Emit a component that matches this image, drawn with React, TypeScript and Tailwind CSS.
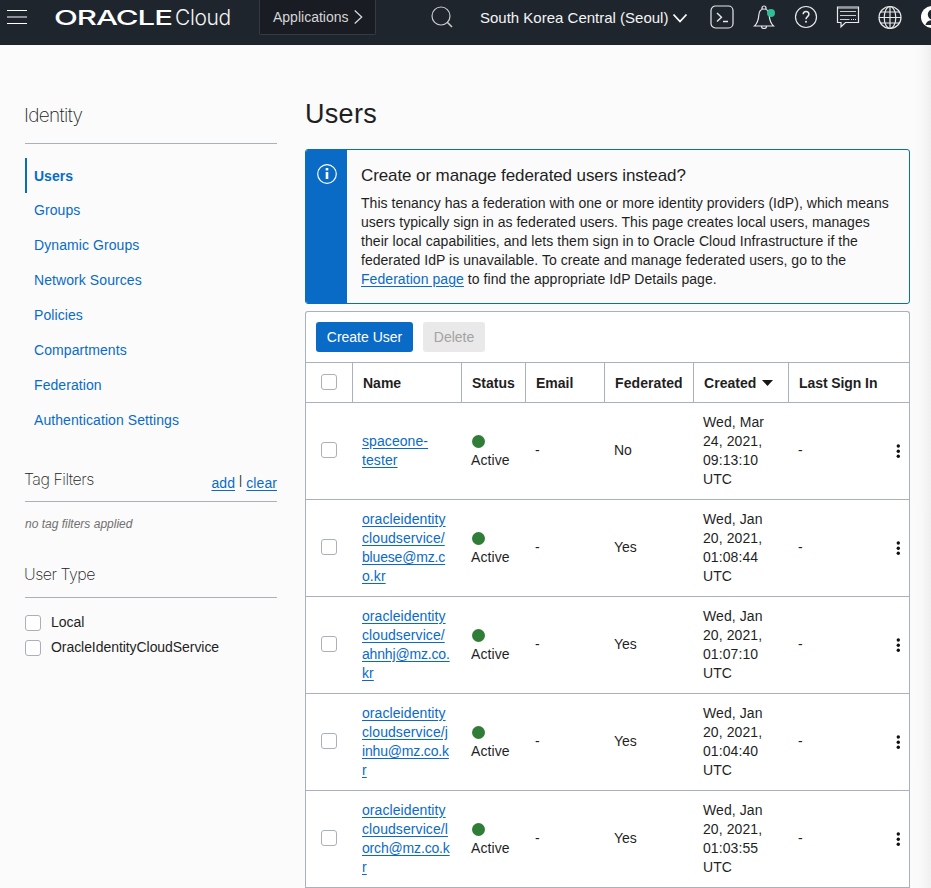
import type { ReactNode } from "react";

const navItems = [
  "Groups",
  "Dynamic Groups",
  "Network Sources",
  "Policies",
  "Compartments",
  "Federation",
  "Authentication Settings",
];

const users = [
  { name: ["spaceone-", "tester"], federated: "No", created: ["Wed, Mar", "24, 2021,", "09:13:10", "UTC"] },
  { name: ["oracleidentity", "cloudservice/", "bluese@mz.c", "o.kr"], federated: "Yes", created: ["Wed, Jan", "20, 2021,", "01:08:44", "UTC"] },
  { name: ["oracleidentity", "cloudservice/", "ahnhj@mz.co.", "kr"], federated: "Yes", created: ["Wed, Jan", "20, 2021,", "01:07:10", "UTC"] },
  { name: ["oracleidentity", "cloudservice/j", "inhu@mz.co.k", "r"], federated: "Yes", created: ["Wed, Jan", "20, 2021,", "01:04:40", "UTC"] },
  { name: ["oracleidentity", "cloudservice/l", "orch@mz.co.k", "r"], federated: "Yes", created: ["Wed, Jan", "20, 2021,", "01:03:55", "UTC"] },
];

const columns = "grid grid-cols-[47px_109px_64px_79px_89px_95px_120px]";

function Checkbox() {
  return <span className="block h-4 w-4 shrink-0 rounded-[3px] border border-[#a9b0ba] bg-white" />;
}

function Lines({ items }: { items: string[] }) {
  return (
    <>
      {items.map((line, i) => (
        <span key={i} className={`block whitespace-nowrap ${line.includes("@") ? "tracking-[-0.17px]" : "tracking-[0.08px]"}`}>{line}</span>
      ))}
    </>
  );
}

function Link({ children }: { children: ReactNode }) {
  return <a className="text-[#0a6bc7] underline underline-offset-2">{children}</a>;
}

function Icon({ children }: { children: ReactNode }) {
  return (
    <svg width="24" height="24" viewBox="0 0 24 24" fill="none" stroke="#e8e9ea" strokeWidth="1.2" className="shrink-0">
      {children}
    </svg>
  );
}

function Header() {
  return (
    <header className="flex h-[45px] items-start overflow-hidden bg-[#1e252d] text-[#f4f4f4]">
      <div className="ml-[7px] mt-2.5 flex w-5 shrink-0 flex-col gap-1.5">
        <span className="h-px bg-white" />
        <span className="-my-px h-[2px] bg-[#8d9094]" />
        <span className="h-px bg-white" />
      </div>
      <div className="ml-[27px] mt-[6px] flex h-6 w-[179px] shrink-0 items-center whitespace-nowrap">
        <span className="w-[121px] origin-left scale-x-[1.52] font-[Inter] text-[20.5px] leading-6 font-medium tracking-[-0.7px] text-white">ORACLE</span>
        <span className="font-[Inter] text-[21px] leading-6 font-light tracking-[-0.4px]">Cloud</span>
      </div>
      <div className="ml-[26px] flex h-[35px] w-[117px] shrink-0 items-center rounded-b-[2px] border border-t-0 border-[#343b43] bg-[#191d23] pl-[13px] text-sm text-[#d5d6d7]">
        <span className="w-[81px]">Applications</span>
        <svg width="9" height="16" viewBox="0 0 9 16" fill="none" stroke="#d5d6d7" strokeWidth="1.3"><path d="M.7 1.5 7.7 8 .7 14.5" /></svg>
      </div>
      <div className="ml-[54px] mt-[6px] flex h-6 shrink-0 items-center">
        <Icon><circle cx="11" cy="10" r="9" stroke="#c8cacc" /><path d="m17 16 5 5" stroke="#c8cacc" strokeWidth="1.6" /></Icon>
        <span className="ml-[26px] w-[193px] whitespace-nowrap text-[15px]">South Korea Central (Seoul)</span>
        <svg width="16" height="10" viewBox="0 0 16 10" fill="none" stroke="white" strokeWidth="1.8" className="-ml-px"><path d="m1.5 1.5 6.5 7 6.500-7" /></svg>
      </div>
      <div className="ml-[22px] mt-[5px] flex shrink-0 items-center gap-[18px]">
        <Icon>
          <rect x="1" y="1" width="22" height="22" rx="4.5" />
          <path d="m7 8 4.500 4.200L7 16.500M13 16.500h5" strokeWidth="1.4" />
        </Icon>
        <Icon>
          <path d="M10 4V3a2 2 0 0 1 4 0v1M12 4C8.800 4 7 6.700 6.800 10.300 6.500 15 5.500 18.200 2.500 21h19c-3-2.800-4-6-4.300-10.700C17 6.700 15.200 4 12 4ZM9.500 21.500a2.500 2 0 0 0 5 0" />
          <circle cx="19" cy="8" r="4" fill="#32bd98" stroke="none" />
        </Icon>
        <Icon>
          <circle cx="12" cy="12" r="10.500" />
          <path d="M9.200 9.300c0-3.700 5.700-3.700 5.700 0 0 2.300-2.900 2.400-2.900 5" strokeWidth="1.500" />
          <circle cx="12" cy="16.800" r="1" fill="#e8e9ea" stroke="none" />
        </Icon>
        <Icon>
          <path d="M1.500 2h21v15.500H9.500l-4.500 4.300v-4.300H1.500Z" />
          <path d="M2 3h20" stroke="#9da1a5" strokeWidth="1.500" />
          <path d="M4 6.500h16M4 10.500h16M4 14.500h9.500" stroke="#c9cbcd" strokeWidth="1" />
          <path d="M15 14.500h5" strokeDasharray="1 1" />
        </Icon>
        <Icon>
          <circle cx="12" cy="12.500" r="11" />
          <ellipse cx="12" cy="12.500" rx="5.800" ry="11" />
          <path d="M12 1.500v22M1 12.500h22M3 7h18M3 18h18" />
        </Icon>
        <svg width="24" height="24" viewBox="0 0 24 24" className="shrink-0"><circle cx="12" cy="12" r="11" fill="white" /><circle cx="13" cy="9.500" r="5.200" fill="#1e252d" /><path d="M5.500 20c.8-3.400 3-5 7.500-5s7 2 7 5Z" fill="#1e252d" /></svg>
      </div>
    </header>
  );
}

function Sidebar() {
  return (
    <aside className="ml-[25px] w-[252px] shrink-0">
      <h2 className="mt-[58px] h-[41px] border-b border-[#a9b1bd] font-[Inter] text-[19px] leading-[25px] font-extralight tracking-[-0.65px] text-[#222]"><span className="-ml-px">Identity</span></h2>
      <nav className="mt-[14px] text-sm text-[#0a6bc7]">
        <a className="flex h-[35px] items-center border-l-2 border-[#0a6bc7] pl-[7px] font-bold">Users</a>
        {navItems.map((label) => (
          <a key={label} className="flex h-[35px] items-center pb-[2px] pl-[9px] tracking-[0.08px]">{label}</a>
        ))}
      </nav>
      <div className="mt-[29px] flex h-[35px] items-start justify-between border-b border-[#a9b1bd]">
        <h3 className="-ml-px font-[Inter] text-[16px] leading-6 font-extralight tracking-[-0.5px] text-[#222]">Tag Filters</h3>
        <div className="mt-1.5 flex gap-[4px] text-sm leading-5 tracking-[0.08px]"><Link>add</Link><span className="-mt-px text-xs">|</span><Link>clear</Link></div>
      </div>
      <p className="mt-[12px] text-xs leading-5 italic text-[#707070]">no tag filters applied</p>
      <h3 className="mt-[28px] h-[36px] border-b border-[#a9b1bd] font-[Inter] text-[16px] leading-6 font-extralight tracking-[-0.5px] text-[#222]"><span className="-ml-px">User Type</span></h3>
      <div className="mt-3 flex flex-col text-sm">
        <label className="flex h-[25px] items-center gap-2.5"><Checkbox /><span className="-mt-[2px]">Local</span></label>
        <label className="flex h-[25px] items-center gap-2.5"><Checkbox /><span className="-mt-[2px] tracking-[-0.06px]">OracleIdentityCloudService</span></label>
      </div>
    </aside>
  );
}

function Notice() {
  return (
    <section className="flex h-[155px] overflow-hidden rounded-[3px] border border-[#0a6bc7]">
      <div className="w-[41px] shrink-0 bg-[#0a6bc7] pt-[13px] pl-[11px]">
        <svg width="20" height="22" viewBox="0 0 20 22" fill="none" stroke="white"><circle cx="10" cy="11" r="9.300" strokeWidth="1.200" /><path d="M10 9v7M10 5v2.400" strokeWidth="2.600" /></svg>
      </div>
      <div className="pl-[14px] pt-[14px] whitespace-nowrap">
        <h2 className="text-[17px] leading-6 tracking-[-0.1px]">Create or manage federated users instead?</h2>
        <p className="mt-[6px] text-sm leading-[19px]">
          <span className="block tracking-[0.03px]">This tenancy has a federation with one or more identity providers (IdP), which means</span>
          <span className="block tracking-[0.02px]">users typically sign in as federated users. This page creates local users, manages</span>
          <span className="block tracking-[0.07px]">their local capabilities, and lets them sign in to Oracle Cloud Infrastructure if the</span>
          <span className="block tracking-[0.03px]">federated IdP is unavailable. To create and manage federated users, go to the</span>
          <span className="block tracking-[0.06px]"><Link>Federation page</Link> to find the appropriate IdP Details page.</span>
        </p>
      </div>
    </section>
  );
}

function UserTable() {
  return (
    <section className="mt-[7px] rounded-t-[3px] border border-b-0 border-[#a9b1bd] bg-white text-sm">
      <div className="flex h-[50px] items-center gap-2.5 pl-2.5">
        <button className="h-[30px] w-[97px] rounded-[3px] bg-[#0a6bc7] text-white">Create User</button>
        <button className="h-[30px] w-[62px] rounded-[3px] bg-[#e9e9e9] text-[#a3a3a3]">Delete</button>
      </div>
      <div className={`${columns} h-[41px] border-y border-[#a9b1bd] font-bold whitespace-nowrap *:flex *:items-center *:border-r *:border-[#a9b1bd] *:pl-2.5 *:last:border-r-0`}>
        <div><span className="-mt-[2px] ml-[5px]"><Checkbox /></span></div>
        <div>Name</div>
        <div>Status</div>
        <div>Email</div>
        <div className="tracking-[0.08px]">Federated</div>
        <div className="gap-1.5 tracking-[0.04px]">Created<svg width="11" height="6" viewBox="0 0 11 6" fill="#161616"><path d="M0 0h11L5.500 6Z" /></svg></div>
        <div className="tracking-[-0.08px]">Last Sign In</div>
      </div>
      {users.map((user, i) => (
        <div key={i} className={`${columns} h-[97px] items-center border-b border-[#a9b1bd] leading-[19px]`}>
          <div className="pb-[2px] pl-[15px]"><Checkbox /></div>
          <div className="pl-[9px] text-[#0a6bc7] underline underline-offset-2"><Lines items={user.name} /></div>
          <div className="pl-[9px] tracking-[0.08px]"><div className="flex h-[19px] items-center"><span className="-mt-px ml-px h-[13px] w-[13px] rounded-full bg-[#2f7d36]" /></div>Active</div>
          <div className="pb-[2px] pl-[9px]">-</div>
          <div className="pb-[2px] pl-[9px]">{user.federated}</div>
          <div className="pl-[9px]"><Lines items={user.created} /></div>
          <div className="flex items-center justify-between pr-[9px] pl-[9px]">
            <span className="-mt-[2px]">-</span>
            <svg width="4" height="14" viewBox="0 0 4 14" fill="#111"><circle cx="2.300" cy="2" r="1.700" /><circle cx="2.300" cy="7.200" r="1.700" /><circle cx="2.300" cy="12.300" r="1.700" /></svg>
          </div>
        </div>
      ))}
    </section>
  );
}

export default function App() {
  return (
    <div className="h-[888px] w-[931px] overflow-hidden bg-[#fbfbfb] font-['Liberation_Sans',Arial,sans-serif] text-[#1f1f1f]">
      <Header />
      <div className="flex h-[843px]">
        <Sidebar />
        <main className="ml-7 w-[605px] shrink-0">
          <h1 className="mt-[51px] mb-[17px] text-[27px] leading-9 tracking-[0.3px]">Users</h1>
          <Notice />
          <UserTable />
        </main>
        <div className="flex-1 bg-linear-to-r from-[#fbfbfb] via-[#f9f9f9] to-[#f0f0f0]" />
      </div>
    </div>
  );
}
